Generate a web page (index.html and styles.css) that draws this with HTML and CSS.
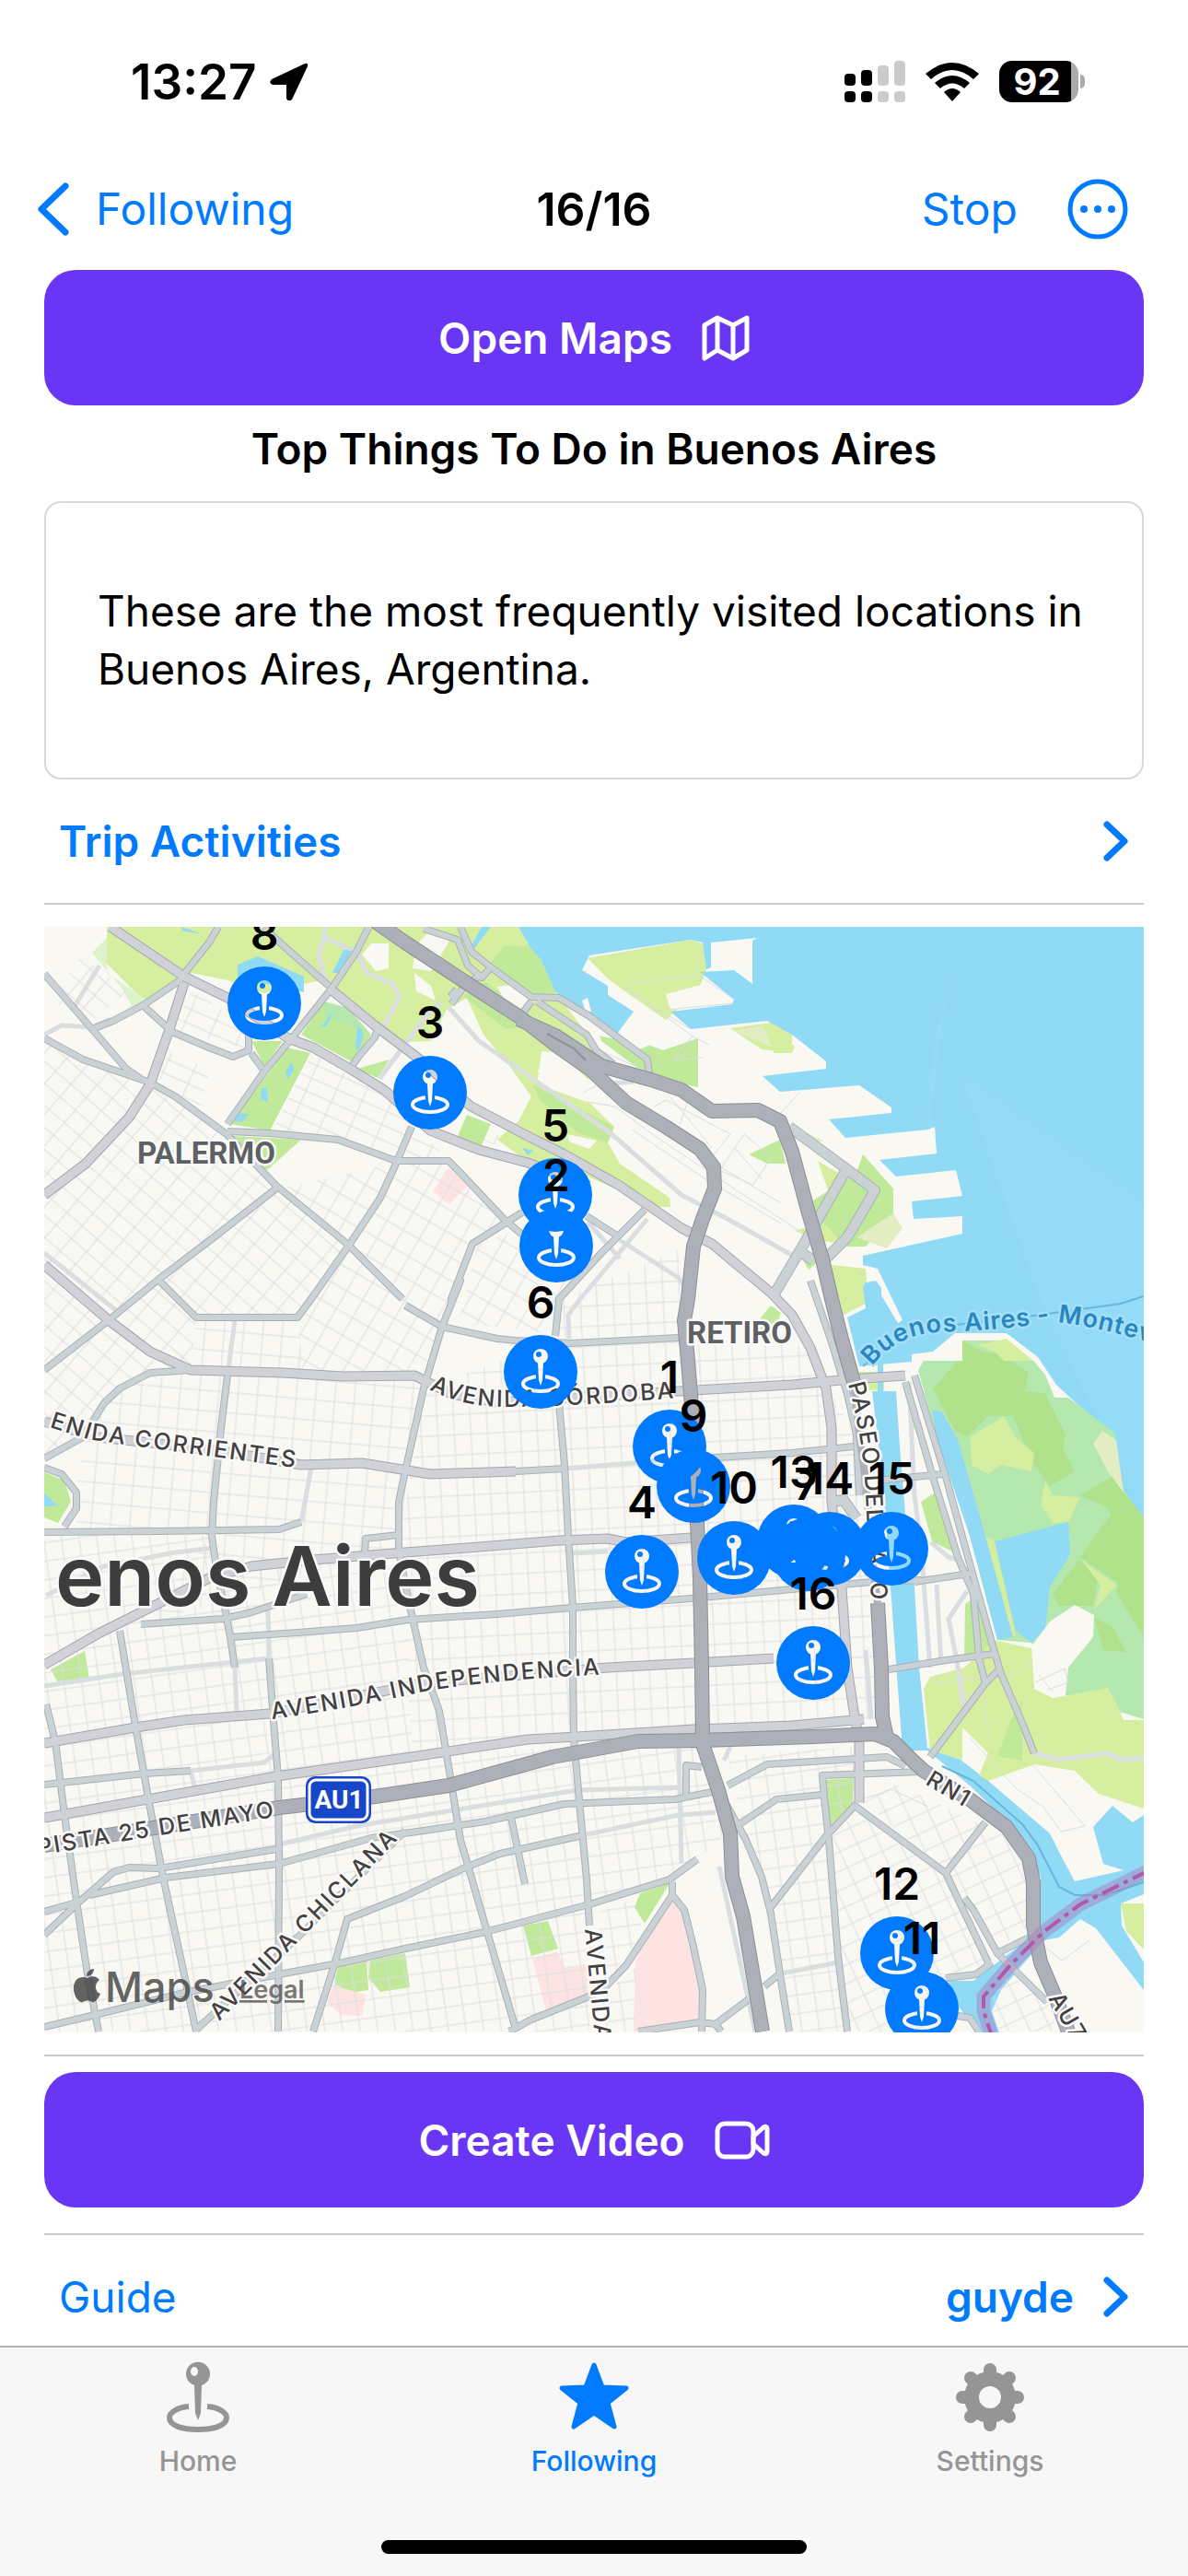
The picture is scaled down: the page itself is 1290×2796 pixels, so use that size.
FILE: index.html
```html
<!DOCTYPE html>
<html lang="en">
<head>
  <meta charset="UTF-8">
  <meta name="viewport" content="width=device-width, initial-scale=1">
  <title>Top Things To Do in Buenos Aires</title>
  <link rel="stylesheet" href="styles.css">
</head>
<body>
  <div class="status-bar">
    <div class="status-time">
      <span>13:27</span>
      <svg width="42" height="42" viewBox="0 0 42 42"><path d="M38 1 2 18Q-2 22 3 24L18 24 18 39Q20 43 24 40L41 4Q42 0 38 1Z"/></svg>
    </div>
    <div class="status-icons">
      <svg width="66" height="45" viewBox="0 0 66 45">
        <g><rect x="0" y="14" width="12" height="13" rx="4"/><rect x="18" y="10" width="12" height="17" rx="4"/><rect x="0" y="33" width="12" height="12" rx="4"/><rect x="18" y="33" width="12" height="12" rx="4"/></g>
        <g fill="#cbcbcb"><rect x="36" y="5" width="12" height="22" rx="4"/><rect x="54" y="0" width="12" height="27" rx="4"/><rect x="36" y="33" width="12" height="12" rx="4"/><rect x="54" y="33" width="12" height="12" rx="4"/></g>
      </svg>
      <svg width="58" height="42" viewBox="0 0 58 42">
        <path d="M0 12Q29-12 58 12L52 18Q29-2 6 18Z"/>
        <path d="M10 22Q29 6 48 22L42 28Q29 17 16 28Z"/>
        <path d="M20 32Q29 24 38 32L29 42Z"/>
      </svg>
      <div class="battery"><span>92</span></div>
    </div>
  </div>

  <header class="nav">
    <a href="#" class="back">
      <svg width="36" height="58" viewBox="0 0 36 58"><path d="M31 4 5 29 31 54"/></svg>
      <span>Following</span>
    </a>
    <h1>16/16</h1>
    <div class="nav-actions">
      <button class="stop">Stop</button>
      <button class="more" aria-label="More">
        <svg width="66" height="66" viewBox="0 0 66 66">
          <circle cx="33" cy="33" r="30" fill="none" stroke="#007aff" stroke-width="5"/>
          <circle cx="18" cy="33" r="4"/><circle cx="33" cy="33" r="4"/><circle cx="48" cy="33" r="4"/>
        </svg>
      </button>
    </div>
  </header>

  <main class="content">
    <button class="primary">
      <span>Open Maps</span>
      <svg width="52" height="50" viewBox="0 0 52 50"><path d="M3 11 17 3 34 11 49 3V38L34 47 17 38 3 47ZM17 3V38M34 11V47"/></svg>
    </button>
    <h2>Top Things To Do in Buenos Aires</h2>
    <p class="card">These are the most frequently visited locations in Buenos Aires, Argentina.</p>
    <a href="#" class="row">
      <strong>Trip Activities</strong>
      <svg class="chevron" width="28" height="44" viewBox="0 0 28 44"><path d="M4 4 23 22 4 40"/></svg>
    </a>
    <hr>

    <div class="map">
      <svg viewBox="0 0 1194 1200" role="img" aria-label="Map of Buenos Aires">
        <defs>
          <pattern id="grid-nw" width="22" height="18" patternUnits="userSpaceOnUse" patternTransform="rotate(41)"><path class="street" d="M0 2H22M2 0V18"/></pattern>
          <pattern id="grid-ne" width="30" height="15" patternUnits="userSpaceOnUse" patternTransform="rotate(24)"><path class="street" d="M0 2H30M2 0V15"/></pattern>
          <pattern id="grid-mid" width="20" height="22" patternUnits="userSpaceOnUse" patternTransform="rotate(30)"><path class="street" d="M0 2H20M2 0V22"/></pattern>
          <pattern id="grid-west" width="21" height="22" patternUnits="userSpaceOnUse" patternTransform="rotate(5)"><path class="street" d="M0 2H21M2 0V22"/></pattern>
          <pattern id="grid-center" width="18" height="22" patternUnits="userSpaceOnUse" patternTransform="rotate(-3)"><path class="street" d="M0 2H18M2 0V22"/></pattern>
          <pattern id="grid-south" width="19" height="20" patternUnits="userSpaceOnUse" patternTransform="rotate(-8)"><path class="street" d="M0 2H19M2 0V20"/></pattern>
          <pattern id="grid-boca" width="21" height="19" patternUnits="userSpaceOnUse" patternTransform="rotate(-25)"><path class="street" d="M0 2H21M2 0V19"/></pattern>

          <!-- wide light streets -->
          <g id="collectors">
            <path d="M30 91 60 42M0 117 19 107 52 109 72 100M0 354 79 417M207 427 200 479M290 587 279 646M2 726 65 694 142 679 184 674M0 824 85 811 242 794M159 916 239 907 252 897M255 996 339 976 412 964 505 949 579 937 692 934M585 986 689 964 729 961M689 891 692 1017M243 740 244 794M207 804 209 852M159 916 164 936"/>
            <path d="M305 0 304 12 340 27 350 50 378 62 386 76 366 112M304 12 298 30 303 52 312 67M364 165 412 100 430 82"/>
            <path d="M439 87 472 124 539 171 615 224 692 291 742 317 815 358M655 317 582 404 569 421 570 447M590 320 625 360M625 340 689 381 698 395M565 588 639 582 690 577M574 680 612 678M614 170 640 168"/>
            <path d="M939 494 945 617 952 671 962 804M969 714 974 801M1002 721 982 751 992 801M963 668 982 684 995 688M892 785 898 860M745 890 738 905M733 1020 772 1199M800 1136 862 1124M1075 897 1102 904 1155 897 1169 904 1194 902M990 790 998 846"/>
          </g>

          <g id="secondary">
            <path d="M189 0 179 17 152 51M239 0 249 11 275 34 309 64M352 1 339 27 312 67 272 117 239 157 199 214M149 57 109 84 75 102 52 111M0 51 52 111 89 154 105 165M0 121 42 144 92 161 115 169 142 184 172 206 198 225 252 281 329 344 389 404M109 87 139 114 179 131 205 141 222 134 222 115M225 137 237 154M335 150 342 140 359 120 362 110"/>
            <path d="M199 222 245 224 319 231 382 254 439 254 452 267 499 317 519 334M252 284 179 341 125 382 70 427 0 481M399 217 382 257 365 294 332 344 292 401 275 424 165 424 125 384M519 310 465 344 442 404 452 384 432 434 412 501 392 591 385 624 385 677 397 737 412 804 429 851 440 917 452 991 479 1084 512 1196"/>
            <path d="M159 481 115 484 82 501 65 517 42 554 0 577M199 487 192 544 184 624 182 661 187 697 197 744 202 771 207 804M0 587 19 594 35 614 35 631 22 651M0 657 125 656 255 654 279 646M105 757 195 751 225 744 285 724M202 771 275 766 339 761 395 752 492 746 572 739 702 729 812 719 899 711 952 709M348 683 349 664 385 660"/>
            <path d="M392 411 432 434 492 447 512 449 572 452 689 446M555 444 559 404 605 354 652 307M589 314 625 337M559 517 565 584 569 661 574 737 574 804 575 881 580 937 589 1034 592 1084M512 591 565 588M712 577 812 571 879 564"/>
            <path d="M82 764 99 867 114 951 129 1031 142 1091 152 1137 165 1199M2 844 12 884 22 964 35 1057 47 1137 59 1199M0 931 109 919 159 916M0 1094 35 1061 75 1026 92 1021 125 1022 252 1001M0 1069 35 1059M49 1051 132 1032 255 1017 355 989 412 981 479 971 565 952 685 947 725 939M244 794 249 861 254 924 255 1017 254 1199M0 1194 55 1181 152 1157 255 1137 325 1124 392 1109 479 1091 592 1061 679 1034 709 1012"/>
            <path d="M165 1197 275 1097 392 981M292 1199 315 1127 329 1077 392 1052 455 1022 495 1006 585 986M507 967 522 1039M682 1037 682 1051 632 1127 609 1151 589 1162 529 1186 505 1199M682 1051 695 1067 705 1107 715 1154 714 1199M645 1199 712 1189 729 1191 765 1164M729 1191 735 1199M697 947 697 910 714 912"/>
            <path d="M742 932 785 909 915 901 935 911M755 974 795 947 845 942M952 917 845 921 847 945 852 991 862 1117 872 1199M732 937 762 991 779 1031 789 1071 799 1137 809 1199M789 1064 849 987 880 954 979 1027 995 1061 1025 1124M1022 972 979 1027M999 1054 1009 1067 1035 1114 1067 1098M1029 1124 1012 1137 979 1141M1035 1114 1089 1167M985 1181 1005 1184 1015 1199M782 1150 799 1136"/>
            <path d="M412 2 449 14 460 42 475 55 485 44 529 76 559 77 592 97 655 144 657 160M452 0 464 27 485 44M535 81 589 117 600 135 618 149M529 81 519 94M475 52 458 62 442 84M441 76 448 68"/>
            <path d="M832 384 855 451 872 507 882 551 885 617M945 487 979 597 1005 691 1029 777 1039 811 1062 864 1075 897M935 494 965 597 992 684 1009 724 1015 794 1022 821M905 601 975 594M945 711 1005 702M917 806 942 802 979 796 1032 789M962 901 1022 821 1037 806"/>
          </g>

          <g id="port-roads">
            <path d="M809 217 869 261 902 286 872 337 846 363M869 267 825 344 792 400M820 352 835 362M855 624 868 622 882 642"/>
          </g>

          <g id="primary">
            <path d="M72 0 152 54 199 77 265 121 292 131 332 154 369 177 385 191 419 221 472 242 525 256 592 281M309 66 359 107 412 147 462 194 525 227 565 247 625 281 692 327 725 344 789 397 812 421 832 457 849 501 855 544 855 624 865 704 869 761 872 804 879 851 885 884 885 951"/>
            <path d="M152 61 135 114 115 171 92 207 45 257 0 291M0 367 70 427 115 461 159 481 259 484 325 488 402 487 442 507 492 516 559 512 689 504 812 497 875 491 935 487"/>
            <path d="M0 537 59 554 125 561 205 571 279 584 345 582 419 594 512 591M0 801 59 767 125 734 179 707 225 694 292 687 392 679 459 674 559 666 612 664 632 668 702 663"/>
            <path d="M0 886 99 869 152 861 245 854 412 821 612 804 705 799 792 794M0 967 112 947 252 922 392 902 525 882 579 879 705 871 812 867 890 860"/>
          </g>

          <g id="highway">
            <path d="M359-6 392 17 459 61 515 97 559 131 592 154 632 191 675 217 712 241 727 261 728 284 715 317 705 347 699 404 695 427 699 471 705 544 709 647 712 707 714 804 715 887 732 937 745 984 747 1031 759 1074 772 1151 780 1199"/>
            <path d="M515 100 555 118 605 151 659 166 692 177 725 200 775 199 799 211 812 244 829 307 845 361 855 404 865 444 879 494M905 734 909 804 910 857 915 880M0 997 125 977 255 956 359 944 439 932 552 901 645 884 715 883 835 879 902 876 922 884 942 904 955 916 979 931 1005 947 1045 977 1069 1011 1074 1037 1074 1084 1082 1124 1099 1164 1112 1199"/>
          </g>

          <mask id="pin-glyph" maskUnits="userSpaceOnUse" x="-41" y="-41" width="82" height="82">
            <rect x="-41" y="-41" width="82" height="82" fill="#fff"/>
            <ellipse cx="0" cy="13" rx="19" ry="8" fill="none" stroke="#000" stroke-width="4"/>
            <rect x="-5" y="2" width="10" height="9" fill="#fff"/>
            <circle cx="0" cy="-17" r="8"/>
            <path d="M-3-10H3L2 9 0 15-2 9Z"/>
            <circle cx="-2" cy="-19" r="3" fill="#fff"/>
          </mask>
          <circle id="pin" r="40" fill="#007aff" mask="url(#pin-glyph)"/>

          <path id="p-corrientes" d="M-60 524 2 542 47 556 95 563 175 574 274 587"/>
          <path id="p-cordoba" d="M418 502Q455 521 500 521 600 520 720 508"/>
          <path id="p-independencia" d="M247 860Q340 847 412 830 500 815 640 810"/>
          <path id="p-mayo" d="M-60 1017 29 1002 125 986 252 966"/>
          <path id="p-chiclana" d="M190 1188 285 1092 410 964"/>
          <path id="p-avenida" d="M587 1088 603 1260"/>
          <path id="p-rn1" d="M956 930 1030 974"/>
          <path id="p-au7" d="M1090 1163 1135 1240"/>
          <path id="p-paseo" d="M873 496Q890 560 892 617L900 770"/>
          <path id="p-ferry" d="M899 477Q925 443 970 440 1040 438 1092 429 1140 430 1260 470"/>
        </defs>

        <rect width="1194" height="1200" fill="#f9f8f3"/>

        <!-- parks -->
        <g class="meadow">
          <path d="M68 0H515L527 21 540 37 555 71 585 110 612 150 590 165 559 137 540 135 535 171 592 191 619 217 612 234 625 257 679 294 680 304 665 304 565 260 525 255 492 231 515 211 529 184 505 151 477 117 459 77 437 90 420 124 385 125 355 107 316 68 300 58 239 72 199 58 160 50 112 84 68 40Z"/>
          <path d="M590 34 702 14 717 19 719 47 709 71 675 101 632 71 612 56ZM745 110 790 104 812 115 812 137 779 133ZM792 109 815 130 812 137H792ZM840 254 862 267 885 297 855 297ZM855 367 892 371 894 397 892 409 862 424ZM815 330 850 320 885 347 840 340ZM885 483H912V503H885Z"/>
        </g>
        <g class="park">
          <path d="M304 81 355 117 335 147 279 117ZM264 131 289 137 245 221 202 214ZM225 124H259L239 151ZM205 227 279 231 242 264 222 251ZM340 154 375 144 362 164ZM459 204 485 214 474 239 449 227ZM0 592 22 601 29 624 15 647 0 641ZM7 806 44 786 49 816 14 819ZM789 411 800 419 789 451 767 437ZM319 1127 350 1122 352 1154 332 1157 315 1147ZM354 1122 392 1114 397 1151 365 1156 352 1141ZM520 1084 547 1079 558 1109 529 1117ZM680 1037 652 1082 641 1064 647 1049ZM847 926 879 924 878 951 853 979ZM952 624 972 611 992 681 964 667ZM1000 735 1015 725 1030 789 999 796Z"/>
          <path d="M480 45 500 20 527 21 540 37 555 71 530 76ZM455 75 480 60 560 120 600 155 585 140 540 110 500 110ZM530 171 619 217 612 234 580 224 540 190ZM599 107 672 134 710 121 710 174 659 164 605 124ZM765 247 799 231 805 257 785 257ZM889 247 922 284 922 311 892 347 872 347 835 310 835 297 882 267ZM820 355 842 362 830 372Z"/>
        </g>
        <path fill="#dcf3cb" d="M52 28 68 12V50L112 80 95 86 84 66 68 48Z"/>
        <path fill="#b4e8ae" d="M304 81 330 88 355 117 340 110 305 98Z"/>
        <g fill="#f9f8f3">
          <path d="M404 20 420 3 440 15 420 48 400 45ZM402 50 420 64 425 80 404 70ZM492 65 515 62 530 80 519 91 500 80ZM535 155 560 163 590 172 588 186 540 165ZM355 18 374 18V45L360 48 345 30ZM568 225 600 232 592 241 570 233ZM610 105 635 90 662 126 645 134ZM560 77 612 107 640 125 600 118Z"/>
          <path d="M724 17 765 14 769 62 749 47 719 44ZM675 73 725 60 749 79 747 84 680 90Z"/>
        </g>
        <path class="hospital" d="M439 261 460 281 440 301 422 287ZM314 1149 349 1159 345 1182 322 1181 307 1167ZM530 1121 557 1112 565 1129 589 1126 590 1161 545 1176ZM681 1054 695 1074 714 1161 710 1187 640 1199 642 1121Z"/>
        <path fill="#e3edc4" d="M922 311 932 327 915 349 882 337ZM820 220 846 232 830 238ZM748 113 780 107 790 130Z"/>

        <!-- water -->
        <g class="water">
          <path d="M515 0 527 21 540 37 555 71 582 87 622 116 640 92 612 74V64L584 47 592 31 702 14 715 17 719 46 724 44V17L774 12 769 15V62L749 47 712 49 749 79 747 84 680 92 702 111 785 102 812 117 849 146V154L780 162 799 179 885 172 920 196V202L852 209 870 229 960 220 967 217 969 246 907 253 925 271 990 264 997 292 942 298 944 317 997 314V333L889 357V367L905 371 932 427 927 430 909 400V392L903 384 892 386 889 391 892 414 872 424 885 477 942 472V464L965 461 989 441H1045L1079 467 1099 497 1125 521 1162 551 1172 617 1194 641V0Z"/>
          <path d="M905 470H911V504H925L929 564 935 637 945 717 950 804 959 891 995 904 1025 927 1092 984 1105 1010 1119 1036 1172 1024 1150 1017 1139 977 1160 954 1182 972 1194 964V1050L1169 1060 1170 1084 1194 1124V1154L1142 1087 1125 1077 1102 1097 1085 1100 1039 1154 1029 1177 1037 1200H1015L992 1171 982 1144H1009L1060 1105 1082 1067V1031L1059 984 1005 932 959 894H932L919 717 907 571 899 504H905Z"/>
          <path d="M210 41 232 32 282 54V71L210 55ZM325 25H335L319 50H313ZM149 0 172 8 150 4ZM464 27 485 0H475L464 20ZM269 146 271 156 264 165 262 158ZM236 175H242L243 190 235 187ZM210 203 222 203 215 212 207 211ZM312 94 315 90 306 108 300 109ZM340 107 347 116 342 133H338ZM519 240 531 243 525 248ZM0 615 15 628 0 629Z"/>
        </g>
        <path fill="#fff" fill-opacity=".03" d="M987 40 972 130 962 216H958L965 130ZM995 160 1080 400 1194 640V300Z"/>
        <path fill="#f9f8f3" d="M584 80 590 77 594 92 588 93Z"/>

        <!-- ecological reserve -->
        <path fill="#b4e8ae" d="M949 481 955 471H997V449H1045L1074 471 1087 486 1097 511H1112L1162 549 1172 611 1194 642V860L1109 834 1072 777 1035 774 1005 661 969 554Z"/>
        <g class="forest">
          <path d="M997 449 1019 461 1040 464 1059 477 1069 484 1065 504 1087 506 1092 517 1109 551 1106 565 1119 591 1092 607 1075 584 1052 531H1025L1002 554 989 547 965 501 975 490 992 471H997Z"/>
          <path d="M1125 617 1159 597 1194 641V771L1165 724V711L1125 684 1159 637 1152 629ZM1125 686 1145 704 1139 737H1102L1095 724ZM1140 750 1160 760 1175 787 1150 785Z"/>
        </g>
        <g class="meadow">
          <path d="M1005 554 1042 531 1055 554 1075 571 1072 591 1039 584 1025 594 1007 584ZM1012 454 1045 447 1074 471H1042L1032 461ZM1087 602 1095 617 1125 619 1112 646 1095 647 1082 627ZM1125 686 1165 714 1140 741 1147 714ZM1022 661 1032 667 1055 770 1045 768Z"/>
          <path d="M1032 774 1075 784V827L1095 837 1155 826 1165 844 1172 861H1194V957L1145 941 1119 916 1075 909 1025 927 1015 921 1025 897 997 869V904L962 894 955 827 962 814 999 804ZM1169 1060 1194 1060V1110L1175 1090ZM939 500 947 520 952 545H944Z"/>
        </g>
        <path class="park" d="M1050 860 1062 840V905L1035 900Z"/>
        <path fill="#f9f8f3" d="M1119 736 1140 747 1139 771 1112 804 1109 834 1095 837 1075 824 1072 781 1092 754Z"/>
        <path fill="#e3edc4" d="M1139 561 1149 547 1164 557 1172 614 1155 591Z"/>
        <path class="water" d="M1032 667 1112 646 1114 681 1092 717 1087 761 1072 777 1055 764ZM964 524 975 527 992 557 1022 661 1052 771 1035 774 1005 661 969 554Z"/>

        <!-- street grids -->
        <path fill="url(#grid-nw)" d="M0 125 115 175 200 225 250 285 330 344 275 424H165L159 480 82 501 42 554 0 577ZM10 80 40 30 90 70 50 105Z"/>
        <path fill="url(#grid-ne)" d="M290 137 385 190 439 254 382 254 319 231 248 221ZM160 68 220 110V132L140 112ZM135 135 180 155 170 200 125 165ZM470 215 520 240 480 235Z"/>
        <path fill="url(#grid-mid)" d="M255 284 382 256 439 257 510 320 465 344 432 434 410 487 280 484 275 424 332 344ZM540 320 600 340 559 400 540 440 450 430 470 345Z"/>
        <path fill="url(#grid-west)" d="M165 424H275L282 484 410 490 385 677 105 757 182 661 35 656V615L42 554 82 501 159 481Z"/>
        <path fill="url(#grid-center)" d="M559 404 690 350V440L700 450 830 455 850 500 882 551 899 684 905 860 715 870 574 880 400 900 385 677 412 501 555 450Z"/>
        <path fill="url(#grid-south)" d="M0 660 182 661 190 700 392 679 400 900 715 880 740 984 682 1040 590 1060 592 1199H0Z"/>
        <path fill="url(#grid-south)" d="M600 1070 640 1055 650 1090 610 1150ZM600 1165 642 1130V1199H604ZM742 900 880 890V950L850 985 862 1117 872 1199H810L789 1071 760 985Z"/>
        <path fill="url(#grid-boca)" d="M885 960 979 1027 1025 1124 980 1140V1199H875L862 1117 853 990ZM890 950 925 930 1040 985 1069 1030 1070 1085 1035 1110 980 1025ZM1040 1130 1090 1170 1100 1199H1037L1029 1170Z"/>
        <g class="rail">
          <path d="M585 180 600 172 640 205 700 240 800 300M590 190 620 195 660 225 735 275 820 330M638 220 720 275 800 322M663 195 675 188 745 225 715 262M680 185 725 240M700 185 690 215M735 262 760 225 790 250 770 280 735 265M750 240 780 275M560 115 650 155M632 62 635 70 700 110M637 60 712 53 748 78M675 90 748 83M705 117 682 145 715 142M708 120 690 145M632 66 706 120 722 128M1076 820 1108 805 1112 820 1090 828M1080 812 1095 830M1040 815 1073 800M880 950 920 936 960 955M1005 880 1055 935 1085 955 1104 982 1130 976 1095 935 1072 908M1088 1108 1105 1122 1135 1100M967 820 1020 815 1025 880M1005 850 1000 830M797 205 820 180"/>
        </g>

        <!-- roads, casing first -->
        <use href="#collectors" class="collector"/>
        <use href="#secondary" class="secondary-case"/>
        <use href="#port-roads" class="port-case"/>
        <use href="#primary" class="primary-case"/>
        <use href="#secondary" class="secondary"/>
        <use href="#port-roads" class="port"/>
        <use href="#primary" class="primary-road"/>
        <use href="#highway" class="highway-case"/>
        <use href="#highway" class="highway"/>
        <path d="M879 494 885 551 892 601 899 684 905 734" fill="none" stroke="#adb0b9" stroke-width="8"/>
        <path d="M546 116 575 132 588 145" fill="none" stroke="#8f919a" stroke-width="2"/>

        <!-- ferry route and boundary -->
        <path class="ferry" d="M889 477 897 470M990 432 1060 424 1169 409 1194 401M975 911 1009 927 1062 974 1079 997 1102 1042 1119 1051H1152L1194 1037"/>
        <path class="border-band" d="M1200 1024 1125 1061 1085 1091 1049 1127 1020 1161V1177L1029 1204"/>
        <path class="border-line" d="M1200 1024 1125 1061 1085 1091 1049 1127 1020 1161V1177L1029 1204"/>

        <!-- labels -->
        <g class="road-label">
          <text text-anchor="end"><textPath href="#p-corrientes" startOffset="100%">ENIDA CORRIENTES</textPath></text>
          <text><textPath href="#p-cordoba">AVENIDA CÓRDOBA</textPath></text>
          <text><textPath href="#p-independencia">AVENIDA INDEPENDENCIA</textPath></text>
          <text text-anchor="end"><textPath href="#p-mayo" startOffset="100%">PISTA 25 DE MAYO</textPath></text>
          <text><textPath href="#p-chiclana">AVENIDA CHICLANA</textPath></text>
          <text><textPath href="#p-avenida">AVENIDA</textPath></text>
          <text><textPath href="#p-rn1">RN1</textPath></text>
          <text><textPath href="#p-au7">AU7</textPath></text>
          <text><textPath href="#p-paseo">PASEO DEL BAJO</textPath></text>
        </g>
        <text class="ferry-label"><textPath href="#p-ferry">Buenos Aires - Montevideo</textPath></text>
        <text class="district" x="176" y="257">PALERMO</text>
        <text class="district" x="755" y="452">RETIRO</text>
        <text class="city" x="12" y="737">enos Aires</text>

        <rect x="284" y="922" width="71" height="51" rx="10" fill="#1746c8"/>
        <rect x="288" y="926" width="63" height="43" rx="7" fill="none" stroke="#fff" stroke-width="3"/>
        <text class="shield" x="320" y="957">AU1</text>

        <!-- pins, drawn north to south -->
        <g class="pins">
          <use href="#pin" x="239" y="83"/><text x="239" y="25">8</text>
          <use href="#pin" x="419" y="180"/><text x="419" y="121">3</text>
          <use href="#pin" x="555" y="291"/><text x="555" y="233">5</text>
          <use href="#pin" x="556" y="346"/><text x="556" y="287">2</text>
          <use href="#pin" x="539" y="483"/><text x="539" y="425">6</text>
          <use href="#pin" x="679" y="564"/><text x="679" y="506">1</text>
          <use href="#pin" x="705" y="607"/><text x="705" y="548">9</text>
          <use href="#pin" x="814" y="667"/><text x="814" y="609">13</text>
          <use href="#pin" x="853" y="675"/>
          <use href="#pin" x="830" y="681"/><text x="828" y="622">7</text>
          <text x="853" y="616">14</text>
          <use href="#pin" x="920" y="675"/><text x="920" y="616">15</text>
          <use href="#pin" x="749" y="685"/><text x="749" y="626">10</text>
          <use href="#pin" x="649" y="700"/><text x="649" y="642">4</text>
          <use href="#pin" x="835" y="799"/><text x="835" y="741">16</text>
          <use href="#pin" x="926" y="1114"/><text x="926" y="1056">12</text>
          <use href="#pin" x="953" y="1174"/><text x="953" y="1115">11</text>
        </g>

        <g class="attribution">
          <path d="M47 1141C52 1138 57 1139 60 1143 54 1147 55 1156 61 1158 59 1163 55 1168 52 1167 49 1165 45 1165 42 1167 37 1169 31 1158 32 1150 33 1141 40 1138 47 1141ZM46 1139C46 1134 50 1131 54 1131 54 1136 50 1139 46 1139Z"/>
          <text class="maps" x="66" y="1167">Maps</text>
          <a href="#"><text class="legal" x="212" y="1163">Legal</text></a>
        </g>
      </svg>
    </div>

    <hr>
    <button class="primary create">
      <span>Create Video</span>
      <svg width="60" height="42" viewBox="0 0 60 42"><rect x="3" y="3" width="39" height="36" rx="8"/><path d="M42 17 53 7Q57 5 57 9V33Q57 37 53 35L42 25Z"/></svg>
    </button>
    <hr>
    <a href="#" class="row">
      <span>Guide</span>
      <span class="row-value">
        <strong>guyde</strong>
        <svg class="chevron" width="28" height="44" viewBox="0 0 28 44"><path d="M4 4 23 22 4 40"/></svg>
      </span>
    </a>
  </main>

  <footer class="tab-bar">
    <nav class="tabs">
      <a href="#" class="tab">
        <svg width="78" height="78" viewBox="0 0 78 78">
          <path d="M29 49C16 50 8 56 8 61 8 70 22 74 39 74S70 70 70 61C70 56 62 50 49 49" fill="none" stroke="#959595" stroke-width="6"/>
          <path fill-rule="evenodd" d="M35 26A13 13 0 1 1 43 26L42 56 39 64 36 56ZM31 11A4 5 0 1 0 39 11 4 5 0 1 0 31 11Z"/>
        </svg>
        <span>Home</span>
      </a>
      <a href="#" class="tab active">
        <svg width="78" height="78" viewBox="0 0 78 78"><path d="M39 4 48 28 74 29 54 45 61 71 39 56 17 71 24 45 4 29 30 28Z" stroke="#007aff" stroke-width="5" stroke-linejoin="round"/></svg>
        <span>Following</span>
      </a>
      <a href="#" class="tab">
        <svg width="78" height="78" viewBox="0 0 78 78" fill="none" stroke="#959595">
          <circle cx="39" cy="39" r="20" stroke-width="16"/>
          <path d="M39 14V9M39 64V69M14 39H9M64 39H69M21 21 18 18M57 21 60 18M21 57 18 60M57 57 60 60" stroke-width="14" stroke-linecap="round"/>
        </svg>
        <span>Settings</span>
      </a>
    </nav>
    <div class="home-indicator"></div>
  </footer>
</body>
</html>
```
FILE: styles.css
```css
* {
  margin: 0;
  padding: 0;
  box-sizing: border-box;
}
body {
  display: flex;
  flex-direction: column;
  height: 100vh;
  background: #fff;
  color: #000;
  font-family: Inter, "Liberation Sans", sans-serif;
  font-size: 46px;
  line-height: 60px;
}
a {
  color: #007aff;
  text-decoration: none;
}
button {
  border: none;
  background: none;
  color: #007aff;
  font: inherit;
  cursor: pointer;
}
svg {
  display: block;
  flex-shrink: 0;
}
strong {
  font-weight: 600;
}

/* status bar */
.status-bar {
  display: flex;
  flex-shrink: 0;
  justify-content: space-between;
  align-items: center;
  height: 161px;
  padding: 16px 119px 0 142px;
}
.status-time {
  display: flex;
  align-items: center;
  gap: 14px;
  font-size: 53px;
  font-weight: 600;
}
.status-icons {
  display: flex;
  align-items: center;
  gap: 22px;
}
.battery {
  position: relative;
  width: 86px;
  height: 45px;
  padding-right: 4px;
  border-radius: 14px;
  background: linear-gradient(to right, #000 78px, #aaa 78px);
  color: #fff;
  font-size: 40px;
  font-weight: 700;
  line-height: 46px;
  text-align: center;
}
.battery::after {
  content: "";
  position: absolute;
  top: 15px;
  right: -7px;
  width: 5px;
  height: 15px;
  border-radius: 0 5px 5px 0;
  background: #aaa;
}

/* navigation */
.nav {
  display: grid;
  grid-template-columns: 1fr auto 1fr;
  align-items: center;
  flex-shrink: 0;
  height: 132px;
  padding: 0 40px;
  font-size: 48px;
}
.nav h1 {
  font-size: 50px;
  font-weight: 600;
}
.back {
  display: flex;
  align-items: center;
  gap: 28px;
}
.back path {
  fill: none;
  stroke: #007aff;
  stroke-width: 7;
  stroke-linecap: round;
  stroke-linejoin: round;
}
.nav-actions {
  display: flex;
  justify-content: flex-end;
  align-items: center;
  gap: 54px;
  padding-right: 25px;
}
.more {
  fill: #007aff;
}

/* content */
.content {
  flex: 1;
  min-height: 0;
  padding: 0 48px;
  overflow-y: auto;
  scrollbar-width: none;
}
.primary {
  display: flex;
  justify-content: center;
  align-items: center;
  gap: 32px;
  width: 100%;
  height: 147px;
  border-radius: 34px;
  background: #6936f5;
  color: #fff;
  font-weight: 600;
}
.primary svg {
  fill: none;
  stroke: #fff;
  stroke-width: 5;
  stroke-linejoin: round;
}
.create {
  margin: 17px 0 28px;
}
h2 {
  margin: 17px 0 27px;
  font-size: 46px;
  font-weight: 600;
  text-align: center;
}
.card {
  padding: 86px 56px;
  border: 2px solid #d8d8d8;
  border-radius: 18px;
  line-height: 63px;
}
.row {
  display: flex;
  justify-content: space-between;
  align-items: center;
  height: 134px;
  padding: 0 16px;
}
.row-value {
  display: flex;
  align-items: center;
  gap: 32px;
}
.chevron {
  fill: none;
  stroke: #007aff;
  stroke-width: 7;
  stroke-linecap: round;
  stroke-linejoin: round;
}
hr {
  height: 2px;
  border: none;
  background: #c9c9cb;
}

/* map */
.map {
  margin: 24px 0;
}
.map svg {
  width: 100%;
}
.map use,
.street,
.rail {
  stroke-linejoin: round;
}
.street {
  fill: none;
  stroke: #dcdde1;
  stroke-width: 1;
}
.rail {
  fill: none;
  stroke: #dcdde1;
  stroke-width: 1;
}
.meadow { fill: #d5eea0; }
.park { fill: #c0ea9a; }
.forest { fill: #b0e18b; }
.water { fill: #90daf6; }
.hospital { fill: #fde4e2; }

.collector, .secondary, .secondary-case, .port, .port-case,
.primary-road, .primary-case, .highway, .highway-case {
  fill: none;
}
.collector { stroke: #dadee1; stroke-width: 5; }
.secondary-case { stroke: #a9b1b6; stroke-width: 8; }
.secondary { stroke: #cbd2d5; stroke-width: 6; }
.port-case { stroke: #a9b1b6; stroke-width: 12; }
.port { stroke: #cbd2d5; stroke-width: 10; }
.primary-case { stroke: #a4a5b0; stroke-width: 11; }
.primary-road { stroke: #d1d1d8; stroke-width: 9; }
.highway-case { stroke: #8c8e97; stroke-width: 16; }
.highway { stroke: #adb0b9; stroke-width: 14; }

.ferry {
  fill: none;
  stroke: #66b6de;
  stroke-width: 2;
}
.border-band {
  fill: none;
  stroke: #a97fc0;
  stroke-opacity: .5;
  stroke-width: 15;
}
.border-line {
  fill: none;
  stroke: #af59a8;
  stroke-width: 4;
  stroke-dasharray: 20 6 5 6;
}
.map text {
  paint-order: stroke;
  stroke: #fafafa;
  stroke-width: 5;
  stroke-linejoin: round;
}
.road-label {
  fill: #43413f;
  font-size: 25px;
  font-weight: 500;
  letter-spacing: 2px;
}
.ferry-label {
  fill: #2787be;
  font-size: 27px;
  font-weight: 600;
  letter-spacing: 1px;
}
.map .ferry-label {
  stroke: #a5e0f7;
}
.district {
  fill: #5d6163;
  font-family: "Liberation Sans Narrow", Roboto, sans-serif;
  font-size: 33px;
  font-weight: 700;
  text-anchor: middle;
}
.city {
  fill: #3d3d3d;
  font-size: 90px;
  font-weight: 600;
}
.map .shield {
  fill: #fff;
  stroke: none;
  font-family: "Liberation Sans Narrow", Roboto, sans-serif;
  font-size: 28px;
  font-weight: 700;
  text-anchor: middle;
}
.map .pins text {
  stroke: none;
  font-size: 48px;
  font-weight: 600;
  text-anchor: middle;
}
.attribution {
  fill: #3c3c3c;
  fill-opacity: .8;
}
.map .attribution text {
  stroke: none;
}
.attribution .maps {
  font-size: 45px;
  font-weight: 500;
}
.attribution .legal {
  fill: #555;
  font-size: 27px;
  font-weight: 600;
  text-decoration: underline;
}

/* tab bar */
.tab-bar {
  display: flex;
  flex-direction: column;
  justify-content: space-between;
  flex-shrink: 0;
  height: 250px;
  padding: 15px 0 24px;
  border-top: 2px solid #b3b3b3;
  background: #f7f7f7;
}
.tabs {
  display: grid;
  grid-template-columns: repeat(3, 1fr);
}
.tab {
  display: flex;
  flex-direction: column;
  align-items: center;
  gap: 12px;
  color: #959595;
  fill: #959595;
  font-size: 30px;
  font-weight: 500;
  line-height: 36px;
}
.tab.active {
  color: #007aff;
  fill: #007aff;
}
.home-indicator {
  align-self: center;
  width: 462px;
  height: 15px;
  border-radius: 8px;
  background: #000;
}
```
